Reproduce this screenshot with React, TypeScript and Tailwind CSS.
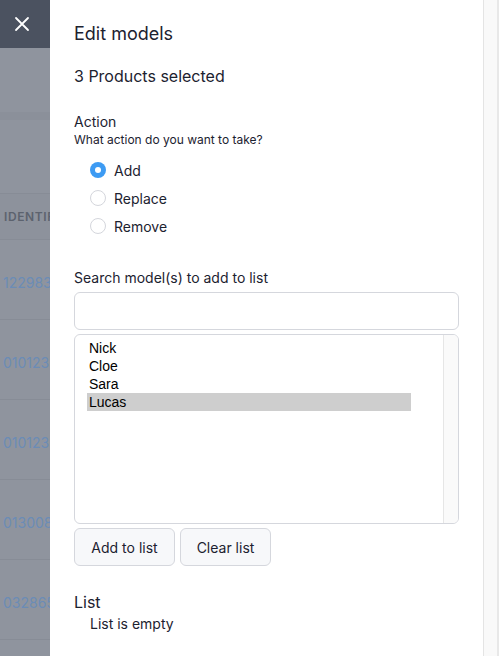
import React from 'react';

const ROWS = ['122983', '010123', '010123', '013008', '032865'];
const OPTIONS = ['Nick', 'Cloe', 'Sara', 'Lucas'];
const ACTIONS = [
  { label: 'Add', checked: true },
  { label: 'Replace', checked: false },
  { label: 'Remove', checked: false },
];

function Radio({ checked }: { checked: boolean }) {
  if (checked) {
    return (
      <span className="flex h-4 w-4 items-center justify-center rounded-full bg-[#3d9bf3]">
        <span className="h-1.5 w-1.5 rounded-full bg-white" />
      </span>
    );
  }
  return <span className="h-4 w-4 rounded-full border border-[#d4d6dc] bg-white" />;
}

export default function App() {
  return (
    <div
      className="flex h-[656px] w-[499px] overflow-hidden bg-white text-[#1c2230]"
      style={{ fontFamily: 'Inter, "Noto Sans", sans-serif' }}
    >
      {/* dimmed page behind the drawer */}
      <div className="flex w-[50px] shrink-0 flex-col overflow-hidden bg-[#8f949e]">
        <div className="flex h-12 shrink-0 items-center justify-center bg-[#4b5260] pl-[8px] pr-[14px]">
          <svg width="16" height="16" viewBox="0 0 16 16" fill="none">
            <path d="M2 2l12 12M14 2L2 14" stroke="white" strokeWidth="1.8" strokeLinecap="round" />
          </svg>
        </div>
        <div className="h-[72px] shrink-0 border-b-[8px] border-[#8b909a]" />
        <div className="h-[73px] shrink-0" />
        <div className="flex h-[47px] shrink-0 items-center overflow-hidden whitespace-nowrap border-y border-[#878c96] bg-[#8d929c] pl-1 text-[12px] font-semibold tracking-wider text-[#5c626e]">
          IDENTIFIER
        </div>
        {ROWS.map((r, i) => (
          <div
            key={i}
            className="flex h-[80px] shrink-0 items-center overflow-hidden whitespace-nowrap border-b border-[#878c96] pl-[3px] pt-[6px] text-[14px] text-[#6b8cb6]"
          >
            {r}
          </div>
        ))}
      </div>

      {/* drawer */}
      <div className="flex-1 px-6 pt-5">
        <h2 className="text-[18px] leading-7">Edit models</h2>
        <p className="mt-4 text-[16px] leading-6">3 Products selected</p>

        <div className="mt-6">
          <p className="text-[14px] leading-5">Action</p>
          <p className="text-[12px] leading-4">What action do you want to take?</p>
          <div className="mt-2 ml-4 flex flex-col">
            {ACTIONS.map((a) => (
              <label key={a.label} className="flex h-7 items-center gap-2 text-[14px]">
                <Radio checked={a.checked} />
                {a.label}
              </label>
            ))}
          </div>
        </div>

        <p className="mt-7 text-[14px] leading-5">Search model(s) to add to list</p>
        <div className="mt-1 h-[38px] w-[385px] rounded-md border border-[#d5d7dd] bg-white" />

        <div className="mt-1 flex h-[190px] w-[385px] overflow-hidden rounded-md border border-[#d5d7dd] bg-white">
          <div
            className="flex-1 pl-3 pt-1 text-[14px] leading-[18px] text-black"
            style={{ fontFamily: '"Liberation Sans", Arial, sans-serif' }}
          >
            {OPTIONS.map((o) => (
              <div key={o} className={`w-[324px] pl-[2px] ${o === 'Lucas' ? 'bg-[#cecece]' : ''}`}>
                {o}
              </div>
            ))}
          </div>
          <div className="w-[15px] border-l border-[#e6e6e6] bg-[#fafafa]" />
        </div>

        <div className="mt-[4px] flex gap-[5px]">
          <button
            type="button"
            className="h-[38px] w-[101px] rounded-md border border-[#d5d7dd] bg-[#f7f8fa] text-[14px]"
          >
            Add to list
          </button>
          <button
            type="button"
            className="h-[38px] w-[91px] rounded-md border border-[#d5d7dd] bg-[#f7f8fa] text-[14px]"
          >
            Clear list
          </button>
        </div>

        <p className="mt-6 text-[16px] leading-6">List</p>
        <p className="pl-4 text-[14px] leading-5">List is empty</p>
      </div>

      {/* page scrollbar */}
      <div className="w-[14px] shrink-0 border-l border-[#e4e4e4] bg-[#f9f9f9]" />
      <div className="w-[2px] shrink-0 bg-[#e8e8e8]" />
    </div>
  );
}
